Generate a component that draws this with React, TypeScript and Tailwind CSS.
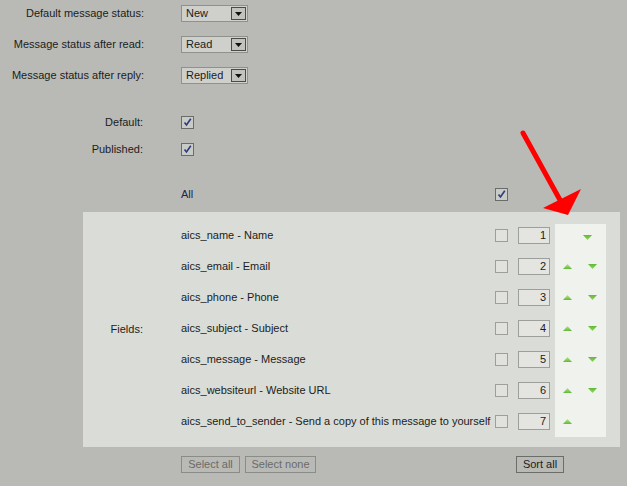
import React from 'react';

const fields = [
  { name: 'aics_name - Name', up: false, down: true },
  { name: 'aics_email - Email', up: true, down: true },
  { name: 'aics_phone - Phone', up: true, down: true },
  { name: 'aics_subject - Subject', up: true, down: true },
  { name: 'aics_message - Message', up: true, down: true },
  { name: 'aics_websiteurl - Website URL', up: true, down: true },
  { name: 'aics_send_to_sender - Send a copy of this message to yourself', up: true, down: false },
];

function Select({ value, width }: { value: string; width: string }) {
  return (
    <div className={`flex h-[17px] ${width} items-center border border-[#8f918c] bg-[#cfd0cc]`}>
      <span className="flex-1 pl-[4px] text-[11px] leading-none text-[#1b1b1b]">{value}</span>
      <span className="mr-[1px] flex h-[13px] w-[15px] items-center justify-center border border-[#4a4a4a] bg-[#c2c3bf]">
        <svg width="7" height="4" viewBox="0 0 7 4">
          <polygon points="0,0 7,0 3.5,4" fill="#111" />
        </svg>
      </span>
    </div>
  );
}

function Check({ checked }: { checked?: boolean }) {
  return checked ? (
    <span className="flex h-[13px] w-[13px] items-center justify-center border border-[#6a6c68] bg-[#c9cbc7]">
      <svg width="9" height="9" viewBox="0 0 9 9">
        <path d="M1.5 4.5 L3.5 7 L7.8 0.8" stroke="#2c3b7e" strokeWidth="1.6" fill="none" />
      </svg>
    </span>
  ) : (
    <span className="block h-[13px] w-[13px] border border-[#9d9f9b] bg-[#e1e2de]" />
  );
}

function Up() {
  return (
    <svg width="9" height="5" viewBox="0 0 9 5">
      <defs>
        <linearGradient id="gu" x1="0" y1="0" x2="0" y2="1">
          <stop offset="0" stopColor="#b5e68c" />
          <stop offset="1" stopColor="#62b838" />
        </linearGradient>
      </defs>
      <polygon points="4.5,0 9,5 0,5" fill="url(#gu)" />
    </svg>
  );
}

function Down() {
  return (
    <svg width="9" height="5" viewBox="0 0 9 5">
      <defs>
        <linearGradient id="gd" x1="0" y1="0" x2="0" y2="1">
          <stop offset="0" stopColor="#62b838" />
          <stop offset="1" stopColor="#8fd460" />
        </linearGradient>
      </defs>
      <polygon points="0,0 9,0 4.5,5" fill="url(#gd)" />
    </svg>
  );
}

export default function App() {
  return (
    <div
      className="relative h-[486px] w-[627px] overflow-hidden bg-[#b9bab6] text-[11px] text-[#1c1c1c]"
      style={{ fontFamily: '"Liberation Sans", Arial, sans-serif' }}
    >
      {/* Status selects */}
      <div className="flex flex-col gap-[14px] pt-[5px]">
        {[
          ['Default message status:', 'New'],
          ['Message status after read:', 'Read'],
          ['Message status after reply:', 'Replied'],
        ].map(([label, value]) => (
          <div key={label} className="flex h-[17px] items-center">
            <span className="w-[145px] pr-[1px] text-right">{label}</span>
            <span className="ml-[36px]">
              <Select value={value} width="w-[67px]" />
            </span>
          </div>
        ))}
      </div>

      {/* Flags */}
      <div className="mt-[32px] flex flex-col gap-[14px]">
        {['Default:', 'Published:'].map((label) => (
          <div key={label} className="flex h-[13px] items-center">
            <span className="w-[145px] pr-[2px] text-right">{label}</span>
            <span className="ml-[36px]">
              <Check checked />
            </span>
          </div>
        ))}
      </div>

      {/* All */}
      <div className="mt-[32px] flex h-[13px] items-center">
        <span className="ml-[181px] w-[314px] text-[#1d2550]">All</span>
        <Check checked />
      </div>

      {/* Fields panel */}
      <div className="ml-[83px] mt-[11px] flex w-[537px] bg-[#dadcd7] pb-[10px] pt-[8px]">
        <div className="flex w-[62px] items-center justify-end pr-[2px] pt-[1px]">Fields:</div>
        <div className="ml-[36px] flex w-[314px] flex-col">
          {fields.map((f) => (
            <div key={f.name} className="flex h-[31px] items-center whitespace-nowrap">
              {f.name}
            </div>
          ))}
        </div>
        <div className="flex flex-col">
          {fields.map((f) => (
            <div key={f.name} className="flex h-[31px] items-center">
              <Check />
            </div>
          ))}
        </div>
        <div className="ml-[10px] flex flex-col">
          {fields.map((f, i) => (
            <div key={f.name} className="flex h-[31px] items-center">
              <span className="flex h-[17px] w-[32px] items-center justify-end border border-[#9d9f9b] bg-[#e4e5e1] pr-[3px] text-[11px]">
                {i + 1}
              </span>
            </div>
          ))}
        </div>
        <div className="ml-[5px] mt-[4px] flex w-[51px] flex-col bg-[#f0f2ee]">
          {fields.map((f, i) => (
            <div
              key={f.name}
              className={`flex items-center ${i === 0 ? 'h-[27px] pl-[28px]' : 'h-[31px] pl-[8px]'}`}
            >
              {f.up && <Up />}
              {f.down && <span className={i === 0 ? '' : 'ml-[16px]'}><Down /></span>}
            </div>
          ))}
        </div>
      </div>

      {/* Buttons */}
      <div className="mt-[9px] flex items-center">
        <button className="ml-[181px] h-[17px] w-[59px] border border-[#8a8c88] text-[11px] leading-none text-[#6a6b68]">
          Select all
        </button>
        <button className="ml-[5px] h-[17px] w-[71px] border border-[#8a8c88] text-[11px] leading-none text-[#6a6b68]">
          Select none
        </button>
        <button className="ml-[200px] h-[17px] w-[48px] border border-[#6b6d69] text-[11px] leading-none text-[#1c1c1c]">
          Sort all
        </button>
      </div>

      {/* Red annotation arrow */}
      <svg className="pointer-events-none absolute left-0 top-0" width="627" height="486">
        <path d="M523 133 L560 200" stroke="#ff0000" strokeWidth="5" strokeLinecap="round" />
        <polygon points="543,208 581,189 568,215" fill="#ff0000" />
      </svg>
    </div>
  );
}
